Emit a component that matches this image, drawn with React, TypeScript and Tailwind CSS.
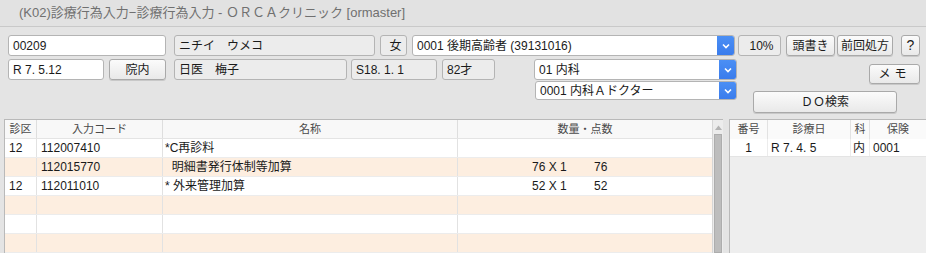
import React from 'react';

const FONT = '"Liberation Sans", "Noto Sans CJK JP", sans-serif';

type FieldProps = { w: string; text: string; ro?: boolean; className?: string };

const Field = ({ w, text, ro, className = '' }: FieldProps) => (
  <div
    className={`${w} h-full flex items-center pl-[4px] text-[12px] text-[#1a1a1a] border border-[#b4b4b4] rounded-[3px] whitespace-pre overflow-hidden ${
      ro ? 'bg-[#ececec]' : 'bg-white'
    } ${className}`}
  >
    {text}
  </div>
);

const Btn = ({ w, text, className = '' }: { w: string; text: string; className?: string }) => (
  <div
    className={`${w} h-full flex items-center justify-center text-[12px] text-[#1a1a1a] border border-[#a9a9a9] rounded-[3px] bg-gradient-to-b from-[#fbfbfb] to-[#e9e9e9] shadow-[0_1px_0_rgba(0,0,0,0.12)] ${className}`}
  >
    {text}
  </div>
);

const Chevron = () => (
  <svg width="8" height="6" viewBox="0 0 8 6">
    <path d="M1 1.5 L4 4.5 L7 1.5" fill="none" stroke="white" strokeWidth="1.6" />
  </svg>
);

const Combo = ({ w, text, className = '' }: { w: string; text: string; className?: string }) => (
  <div className={`${w} h-full flex border border-[#b4b4b4] rounded-[3px] bg-white overflow-hidden ${className}`}>
    <div className="flex-1 flex items-center pl-[4px] text-[12px] text-[#1a1a1a] whitespace-pre">{text}</div>
    <div className="w-[17px] h-full flex items-center justify-center bg-gradient-to-b from-[#4b8ff5] to-[#3a7cec]">
      <Chevron />
    </div>
  </div>
);

const rows = [
  { ku: '12', code: '112007410', name: '*C再診料', qty: '', pts: '' },
  { ku: '', code: '112015770', name: '  明細書発行体制等加算', qty: '76 X 1', pts: '76' },
  { ku: '12', code: '112011010', name: '* 外来管理加算', qty: '52 X 1', pts: '52' },
  { ku: '', code: '', name: '', qty: '', pts: '' },
  { ku: '', code: '', name: '', qty: '', pts: '' },
  { ku: '', code: '', name: '', qty: '', pts: '' },
];

export default function App() {
  return (
    <div className="w-[926px] h-[253px] overflow-hidden bg-[#e4e4e4] flex flex-col" style={{ fontFamily: FONT }}>
      {/* title bar */}
      <div className="h-[27px] shrink-0 flex items-center pl-[19px] border-b border-[#c9c9c9] text-[13px] text-[#707070] bg-[#e2e2e2]">
        (K02)診療行為入力−診療行為入力 - ＯＲＣＡクリニック [ormaster]
      </div>

      {/* form area */}
      <div className="h-[92px] shrink-0 flex flex-col pt-[8px]">
        <div className="flex h-[21px]">
          <Field w="w-[158px]" text="00209" className="ml-[8px]" />
          <Field w="w-[201px]" text="ニチイ　ウメコ" ro className="ml-[8px]" />
          <Field w="w-[27px]" text="女" ro className="ml-[5px] justify-center pl-0" />
          <Combo w="w-[323px]" text="0001 後期高齢者 (39131016)" className="ml-[5px]" />
          <Field w="w-[43px]" text="10%" ro className="ml-[3px] justify-center pl-0" />
          <Btn w="w-[49px]" text="頭書き" className="ml-[5px]" />
          <Btn w="w-[56px]" text="前回処方" className="ml-[2px]" />
          <Btn w="w-[19px]" text="?" className="ml-[8px] text-[14px]" />
        </div>

        <div className="flex mt-[3px]">
          <div className="flex h-[21px]">
            <Field w="w-[96px]" text="R 7. 5.12" className="ml-[8px]" />
            <Btn w="w-[57px]" text="院内" className="ml-[5px] border-[#8f8f8f]" />
            <Field w="w-[173px]" text="日医　梅子" ro className="ml-[8px]" />
            <Field w="w-[86px]" text="S18. 1. 1" ro className="ml-[4px]" />
            <Field w="w-[53px]" text="82才" ro className="ml-[5px]" />
          </div>
          <div className="flex flex-col ml-[39px]">
            <div className="h-[21px]">
              <Combo w="w-[203px]" text="01 内科" />
            </div>
            <div className="h-[19px] mt-[1px] ml-[1px]">
              <Combo w="w-[202px]" text="0001 内科Ａドクター" />
            </div>
          </div>
          <div className="flex flex-col ml-[16px] w-[167px]">
            <div className="h-[20px] mt-[5px] self-end">
              <Btn w="w-[51px]" text="メモ" className="tracking-[4px]" />
            </div>
            <div className="h-[22px] mt-[7px]">
              <Btn w="w-[144px]" text="ＤＯ検索" />
            </div>
          </div>
        </div>
      </div>

      {/* main area */}
      <div className="flex flex-1 min-h-0">
        <div className="ml-[4px] w-[719px] flex border-t border-l border-[#b9b9b9] bg-white">
          <div className="w-[707px] flex flex-col">
            <div className="h-[19px] shrink-0 flex text-[11px] text-[#4a4a4a] bg-[#f8f8f8] border-b border-[#e4e4e4]">
              <div className="w-[32px] flex items-center justify-center border-r border-[#dedede]">診区</div>
              <div className="w-[126px] flex items-center justify-center border-r border-[#dedede]">入力コード</div>
              <div className="w-[295px] flex items-center justify-center border-r border-[#dedede]">名称</div>
              <div className="w-[254px] flex items-center justify-center">数量・点数</div>
            </div>
            {rows.map((r, i) => (
              <div
                key={i}
                className={`h-[19px] shrink-0 flex text-[12px] text-[#1a1a1a] border-b border-[#ececec] ${
                  i % 2 === 1 ? 'bg-[#fdeee0]' : 'bg-white'
                }`}
              >
                <div className="w-[32px] flex items-center pl-[4px] border-r border-[#e2e2e2]">{r.ku}</div>
                <div className="w-[126px] flex items-center pl-[4px] border-r border-[#e2e2e2]">{r.code}</div>
                <div className="w-[295px] flex items-center pl-[2px] border-r border-[#e2e2e2] whitespace-pre">{r.name}</div>
                <div className="w-[254px] flex items-center pl-[74px]">
                  <span className="w-[62px]">{r.qty}</span>
                  <span>{r.pts}</span>
                </div>
              </div>
            ))}
          </div>
          {/* scrollbar */}
          <div className="w-[12px] flex flex-col bg-[#ececec] border-l border-[#d6d6d6]">
            <div className="h-[14px] flex items-center justify-center">
              <svg width="7" height="5" viewBox="0 0 7 5">
                <path d="M0 5 L3.5 0.5 L7 5 Z" fill="#b3b3b3" />
              </svg>
            </div>
            <div className="flex-1 mx-[1px] bg-[#bdbdbd] border border-[#adadad]" />
          </div>
        </div>

        <div className="ml-[6px] flex-1 flex flex-col border-t border-l border-[#b9b9b9] bg-[#eeeeee]">
          <div className="h-[19px] shrink-0 flex text-[11px] text-[#4a4a4a] bg-[#fafafa]">
            <div className="w-[38px] flex items-center justify-center border-r border-[#e2e2e2]">番号</div>
            <div className="w-[83px] flex items-center justify-center border-r border-[#e2e2e2]">診療日</div>
            <div className="w-[19px] flex items-center justify-center border-r border-[#e2e2e2]">科</div>
            <div className="flex-1 flex items-center justify-center">保険</div>
          </div>
          <div className="h-[18px] shrink-0 flex text-[12px] text-[#1a1a1a] bg-white border-b border-[#e4e4e4]">
            <div className="w-[38px] flex items-center justify-center border-r border-[#ececec]">1</div>
            <div className="w-[83px] flex items-center pl-[3px] border-r border-[#ececec]">R 7. 4. 5</div>
            <div className="w-[19px] flex items-center pl-[2px] border-r border-[#ececec]">内</div>
            <div className="flex-1 flex items-center pl-[3px]">0001</div>
          </div>
        </div>
      </div>
    </div>
  );
}
